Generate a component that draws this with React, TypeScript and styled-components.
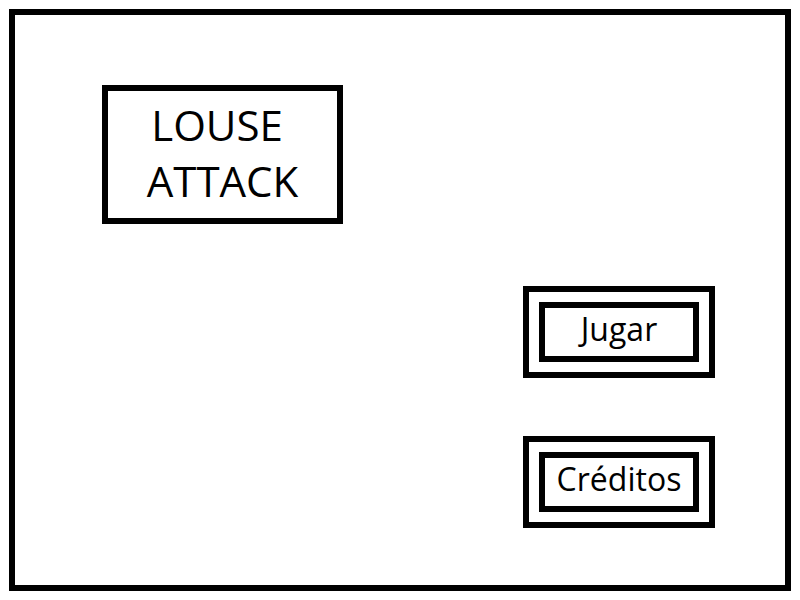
import React from 'react';
import styled, { createGlobalStyle } from 'styled-components';

const GlobalStyle = createGlobalStyle`
  html, body {
    margin: 0;
    padding: 0;
    background: #fff;
  }
  body {
    font-family: 'Open Sans', 'Liberation Sans', sans-serif;
    color: #000;
  }
`;

const Frame = styled.div`
  box-sizing: border-box;
  width: 782px;
  height: 582px;
  margin: 9px;
  border: 6px solid #000;
  padding: 70px 70px 0 87px;
  display: flex;
  flex-direction: column;
`;

const TitleBox = styled.div`
  box-sizing: border-box;
  width: 241px;
  height: 139px;
  border: 6px solid #000;
  padding-top: 6px;
  display: flex;
  flex-direction: column;
  align-items: center;
`;

const TitleLine = styled.div`
  font-size: 42px;
  line-height: 56px;
  white-space: pre;
`;

const Menu = styled.div`
  align-self: flex-end;
  display: flex;
  flex-direction: column;
  gap: 58px;
  margin-top: 62px;
`;

const OuterButton = styled.div`
  box-sizing: border-box;
  width: 192px;
  height: 92px;
  border: 6px solid #000;
  padding: 10px;
`;

const InnerButton = styled.div`
  box-sizing: border-box;
  height: 100%;
  border: 6px solid #000;
  display: flex;
  align-items: center;
  justify-content: center;
  padding-bottom: 8px;
  font-size: 32px;
`;

export default function App() {
  return (
    <>
      <GlobalStyle />
      <Frame>
        <TitleBox>
          <TitleLine>{'LOUSE '}</TitleLine>
          <TitleLine>ATTACK</TitleLine>
        </TitleBox>
        <Menu>
          <OuterButton>
            <InnerButton>Jugar</InnerButton>
          </OuterButton>
          <OuterButton>
            <InnerButton>Créditos</InnerButton>
          </OuterButton>
        </Menu>
      </Frame>
    </>
  );
}
